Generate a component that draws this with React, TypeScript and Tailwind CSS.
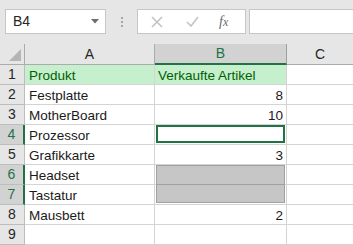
import React from 'react';

const rows: { n: number; a: string; b: string }[] = [
  { n: 1, a: 'Produkt', b: 'Verkaufte Artikel' },
  { n: 2, a: 'Festplatte', b: '8' },
  { n: 3, a: 'MotherBoard', b: '10' },
  { n: 4, a: 'Prozessor', b: '' },
  { n: 5, a: 'Grafikkarte', b: '3' },
  { n: 6, a: 'Headset', b: '' },
  { n: 7, a: 'Tastatur', b: '' },
  { n: 8, a: 'Mausbett', b: '2' },
  { n: 9, a: '', b: '' },
];

const hot = [4, 6, 7];

const Toolbar = () => (
  <div className="flex h-[44px] items-start bg-[#e6e6e6] pt-[9px] pl-[5px]">
    {/* name box */}
    <div className="flex h-[25px] w-[101px] items-center justify-between border border-[#c6c6c6] bg-white pl-[7px] pr-[6px]">
      <span className="text-[14px] text-[#262626]">B4</span>
      <svg width="8" height="5" viewBox="0 0 8 5">
        <path d="M0 0h8L4 4.5z" fill="#6d6d6d" />
      </svg>
    </div>
    <div className="flex h-[25px] w-[31px] flex-col items-center justify-center gap-[2px]">
      <span className="h-[2px] w-[2px] bg-[#a6a6a6]" />
      <span className="h-[2px] w-[2px] bg-[#a6a6a6]" />
      <span className="h-[2px] w-[2px] bg-[#a6a6a6]" />
    </div>
    {/* cancel / enter / fx */}
    <div className="flex h-[25px] w-[109px] items-center border border-[#c6c6c6] bg-white">
      <svg className="ml-[13px]" width="12" height="12" viewBox="0 0 12 12">
        <path d="M1 1l10 10M11 1L1 11" stroke="#c3c3c3" strokeWidth="1.6" />
      </svg>
      <svg className="ml-[23px]" width="13" height="11" viewBox="0 0 13 11">
        <path d="M1 6l4 4L12 1" stroke="#c3c3c3" strokeWidth="1.6" fill="none" />
      </svg>
      <span className="ml-[20px] font-['Liberation_Serif'] text-[14px] italic text-[#6a6a6a]">
        f<span className="text-[12px]">x</span>
      </span>
    </div>
    <div className="ml-[3px] h-[25px] flex-1 border border-r-0 border-[#c6c6c6] bg-white" />
  </div>
);

const App = () => {
  return (
    <div className="h-[245px] w-[353px] overflow-hidden bg-white font-['Liberation_Sans',sans-serif] text-[13.5px] leading-[15px]">
      <Toolbar />
      <div className="grid grid-cols-[25px_130px_132px_66px]">
        {/* header row */}
        <div className="relative h-[21px] border-r border-b border-[#ababab] bg-[#e6e6e6]">
          <svg className="absolute right-[3px] bottom-[3px]" width="12" height="12" viewBox="0 0 12 12">
            <path d="M12 0v12H0z" fill="#b5b5b5" />
          </svg>
        </div>
        <div className="flex h-[21px] items-center justify-center border-r border-b border-[#ababab] bg-[#e6e6e6] text-[14px] text-[#262626]">
          A
        </div>
        <div className="flex h-[21px] items-center justify-center border-r border-r-[#9e9e9e] border-b-2 border-b-[#217346] bg-[#d2d2d2] text-[14px] text-[#217346]">
          B
        </div>
        <div className="flex h-[21px] items-center justify-center border-b border-[#ababab] bg-[#e6e6e6] text-[14px] text-[#262626]">
          C
        </div>

        {rows.map((r) => {
          const isHot = hot.includes(r.n);
          const head = r.n === 1;
          return (
            <React.Fragment key={r.n}>
              <div
                className={
                  isHot
                    ? 'flex h-[20px] items-center justify-center border-r-2 border-r-[#217346] border-b border-b-[#bdbdbd] bg-[#d2d2d2] text-[14px] text-[#217346]'
                    : 'flex h-[20px] items-center justify-center border-r border-b border-[#bdbdbd] bg-[#e6e6e6] text-[14px] text-[#262626]'
                }
              >
                {r.n}
              </div>
              <div
                className={
                  head
                    ? 'flex h-[20px] items-end border-r border-b border-[#d4d4d4] bg-[#c6efce] pb-[1px] pl-[4px] text-[#006100]'
                    : 'flex h-[20px] items-end border-r border-b border-[#d4d4d4] pb-[1px] pl-[4px] text-[#1a1a1a]'
                }
              >
                {r.a}
              </div>
              <div
                className={
                  head
                    ? 'flex h-[20px] items-end border-r border-b border-[#d4d4d4] bg-[#c6efce] pb-[1px] pl-[3px] text-[#006100]'
                    : 'relative flex h-[20px] items-end justify-end border-r border-b border-[#d4d4d4] pb-[1px] pr-[3px] text-[#1a1a1a]'
                }
              >
                {r.b}
                {r.n === 4 && (
                  <span className="absolute inset-x-[1px] top-0 bottom-[1px] border-2 border-[#217346]" />
                )}
                {r.n === 6 && (
                  <span className="absolute inset-x-[1px] top-0 bottom-[-1px] border border-[#a0a0a0] bg-[#c6c6c6]" />
                )}
                {r.n === 7 && (
                  <span className="absolute inset-x-[1px] top-0 bottom-[1px] border border-t-0 border-[#a0a0a0] bg-[#c6c6c6]" />
                )}
              </div>
              <div className="h-[20px] border-b border-[#d4d4d4]" />
            </React.Fragment>
          );
        })}
      </div>
    </div>
  );
};

export default App;
